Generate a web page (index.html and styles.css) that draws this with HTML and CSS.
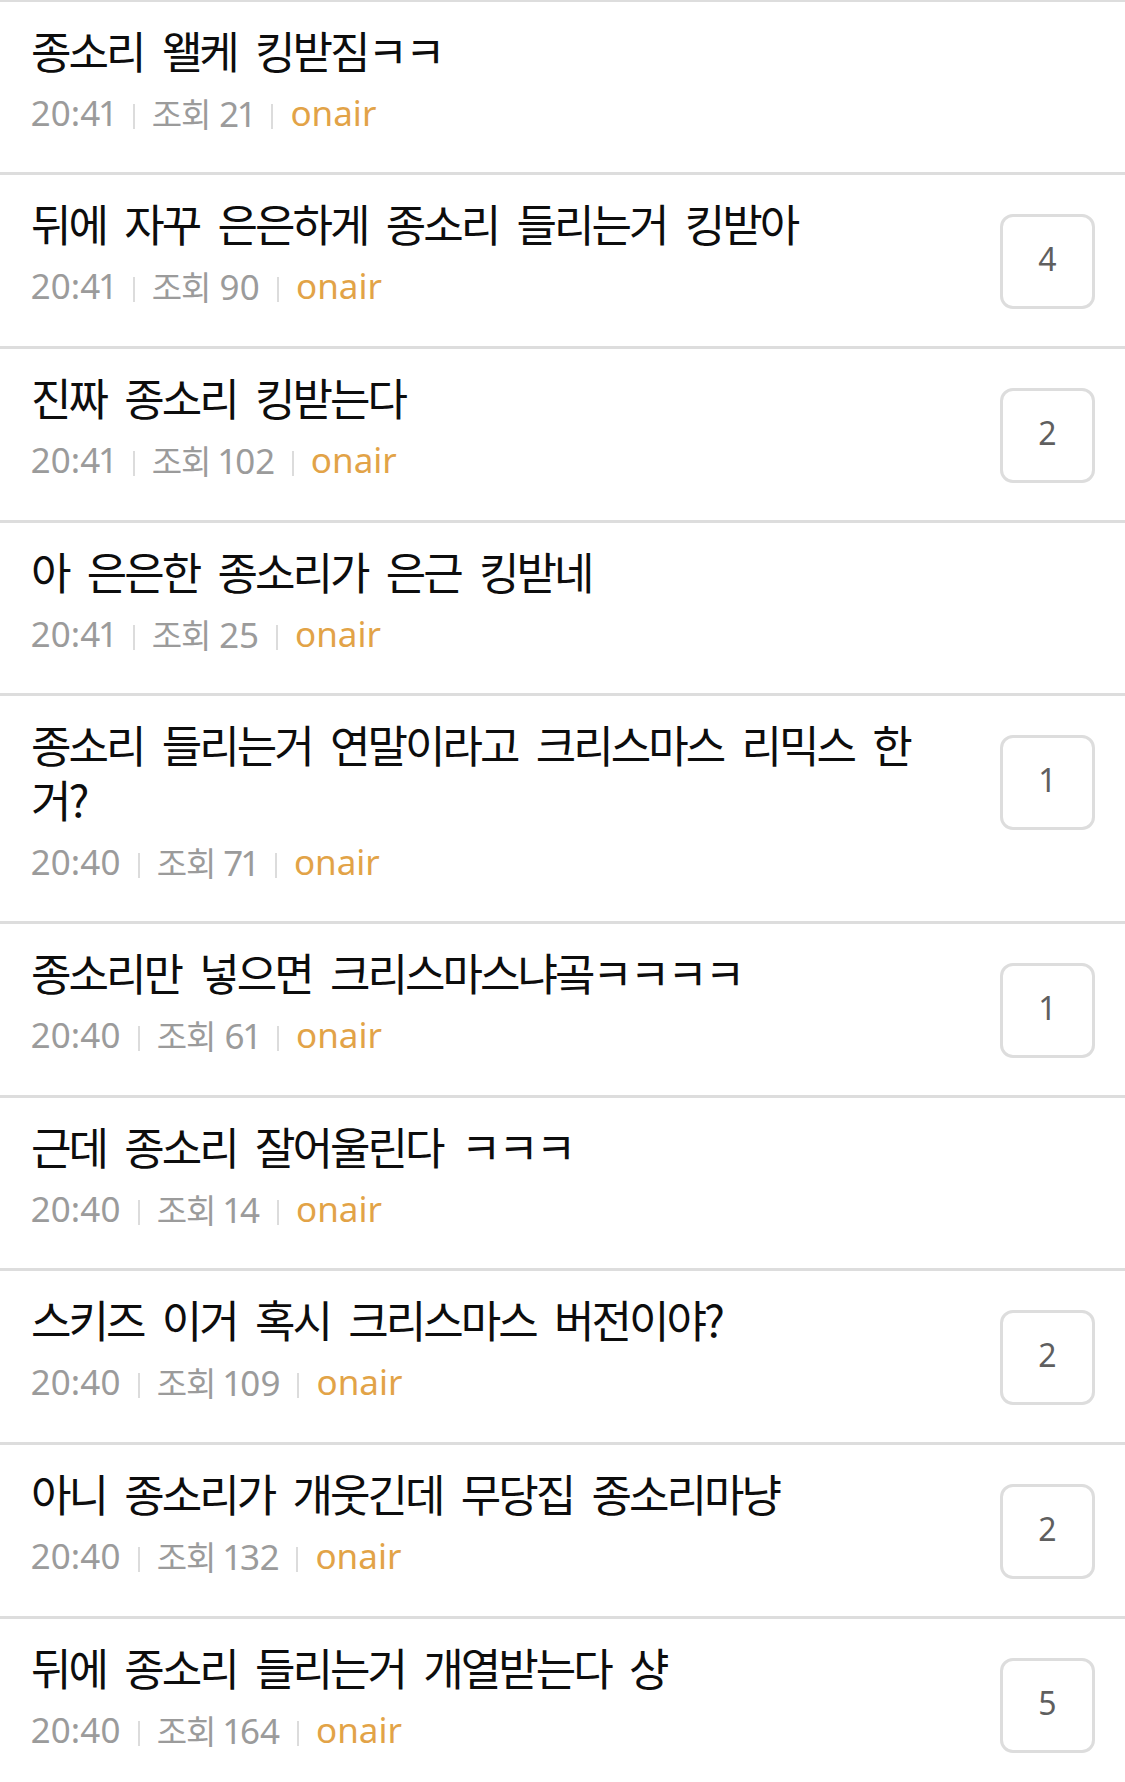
FILE: index.html
```html
<!DOCTYPE html>
<html lang="ko">

<head>
    <meta charset="UTF-8">
    <meta name="viewport" content="width=device-width, initial-scale=1.0">
    <title>onair</title>
    <link rel="stylesheet" href="styles.css">
</head>

<body>
    <ul class="list">
        <li class="item">
            <div class="item-body">
                <p class="title">종소리 왤케 킹받짐ㅋㅋ</p>
                <p class="meta"><span>20:41</span><span class="sep"></span><span><span class="label">조회</span> 21</span><span class="sep"></span><span class="board">onair</span></p>
            </div>
        </li>
        <li class="item">
            <div class="item-body">
                <p class="title">뒤에 자꾸 은은하게 종소리 들리는거 킹받아</p>
                <p class="meta"><span>20:41</span><span class="sep"></span><span><span class="label">조회</span> 90</span><span class="sep"></span><span class="board">onair</span></p>
            </div>
            <span class="count">4</span>
        </li>
        <li class="item">
            <div class="item-body">
                <p class="title">진짜 종소리 킹받는다</p>
                <p class="meta"><span>20:41</span><span class="sep"></span><span><span class="label">조회</span> 102</span><span class="sep"></span><span class="board">onair</span></p>
            </div>
            <span class="count">2</span>
        </li>
        <li class="item">
            <div class="item-body">
                <p class="title">아 은은한 종소리가 은근 킹받네</p>
                <p class="meta"><span>20:41</span><span class="sep"></span><span><span class="label">조회</span> 25</span><span class="sep"></span><span class="board">onair</span></p>
            </div>
        </li>
        <li class="item">
            <div class="item-body">
                <p class="title">종소리 들리는거 연말이라고 크리스마스 리믹스 한 거?</p>
                <p class="meta"><span>20:40</span><span class="sep"></span><span><span class="label">조회</span> 71</span><span class="sep"></span><span class="board">onair</span></p>
            </div>
            <span class="count">1</span>
        </li>
        <li class="item">
            <div class="item-body">
                <p class="title">종소리만 넣으면 크리스마스냐곸ㅋㅋㅋㅋ</p>
                <p class="meta"><span>20:40</span><span class="sep"></span><span><span class="label">조회</span> 61</span><span class="sep"></span><span class="board">onair</span></p>
            </div>
            <span class="count">1</span>
        </li>
        <li class="item">
            <div class="item-body">
                <p class="title">근데 종소리 잘어울린다 ㅋㅋㅋ</p>
                <p class="meta"><span>20:40</span><span class="sep"></span><span><span class="label">조회</span> 14</span><span class="sep"></span><span class="board">onair</span></p>
            </div>
        </li>
        <li class="item">
            <div class="item-body">
                <p class="title">스키즈 이거 혹시 크리스마스 버전이야?</p>
                <p class="meta"><span>20:40</span><span class="sep"></span><span><span class="label">조회</span> 109</span><span class="sep"></span><span class="board">onair</span></p>
            </div>
            <span class="count">2</span>
        </li>
        <li class="item">
            <div class="item-body">
                <p class="title">아니 종소리가 개웃긴데 무당집 종소리마냥</p>
                <p class="meta"><span>20:40</span><span class="sep"></span><span><span class="label">조회</span> 132</span><span class="sep"></span><span class="board">onair</span></p>
            </div>
            <span class="count">2</span>
        </li>
        <li class="item">
            <div class="item-body">
                <p class="title">뒤에 종소리 들리는거 개열받는다 샹</p>
                <p class="meta"><span>20:40</span><span class="sep"></span><span><span class="label">조회</span> 164</span><span class="sep"></span><span class="board">onair</span></p>
            </div>
            <span class="count">5</span>
        </li>
    </ul>
</body>

</html>
```

FILE: styles.css
```css
body {
    margin: 0;
    background: #fff;
    font-family: "Noto Sans CJK KR", sans-serif;
}

.list {
    list-style: none;
    margin: -1px 0 0;
    padding: 0;
}

.item {
    display: flex;
    align-items: flex-start;
    gap: 34px;
    border-top: 3px solid #dddddd;
    padding: 21px 30px 37px 31px;
}

.item-body {
    flex: 1;
    min-width: 0;
}

.title {
    margin: 0;
    font-size: 44px;
    line-height: 55px;
    letter-spacing: -3px;
    word-spacing: 9px;
    color: #0d0d0d;
}

.meta {
    margin: 13px 0 0;
    height: 44px;
    font-family: "Noto Sans", "Noto Sans CJK KR", sans-serif;
    font-size: 35px;
    line-height: 44px;
    color: #9b9b9b;
    font-variant-numeric: proportional-nums;
    display: flex;
    align-items: center;
}

.label {
    font-family: "Noto Sans CJK KR", sans-serif;
    font-size: 33px;
    letter-spacing: -1px;
}

.sep {
    display: inline-block;
    width: 2px;
    height: 25px;
    margin: 6px 17px 0;
    background: #dcdcdc;
}

.board {
    color: #e2a347;
}

.count {
    flex: none;
    box-sizing: border-box;
    width: 95px;
    height: 95px;
    margin-top: 18px;
    padding-bottom: 7px;
    border: 3px solid #dddddd;
    border-radius: 13px;
    display: flex;
    align-items: center;
    justify-content: center;
    font-family: "Noto Sans", sans-serif;
    font-size: 32px;
    color: #5f5f5f;
}
```
